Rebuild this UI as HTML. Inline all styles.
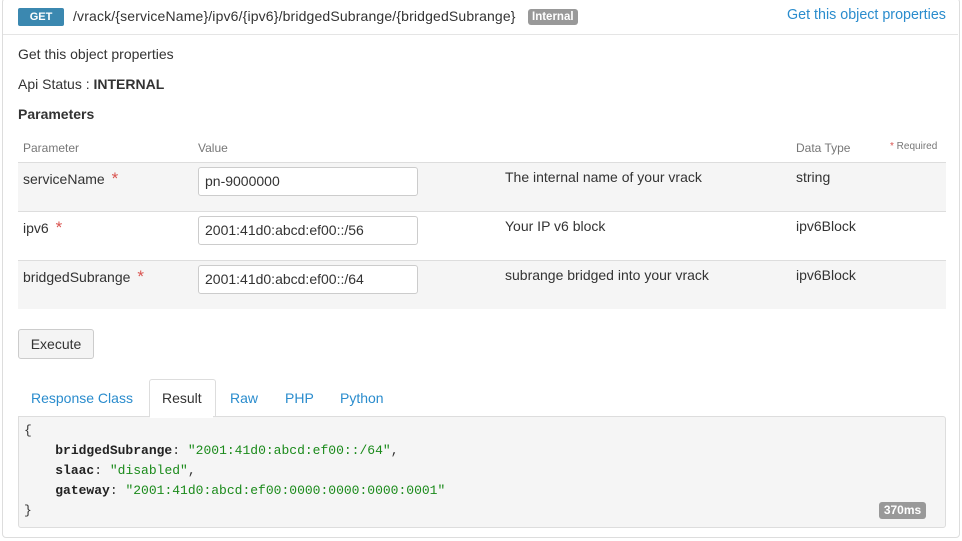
<!DOCTYPE html><html><head><style>
body{margin:0;width:962px;height:541px;background:#fff;font-family:"Liberation Sans",sans-serif;font-size:14px;color:#333;position:relative;overflow:hidden}
.a{position:absolute}
.panel{left:2px;top:-2px;width:956px;height:538px;border:1px solid #ddd;border-radius:4px}
.hdr{left:3px;top:34px;width:955px;border-top:1px solid #e5e5e5}
.get{left:18px;top:8px;width:46px;height:18px;background:#3b88b0;color:#fff;font-size:11px;font-weight:bold;text-align:center;line-height:18px;border-radius:2px}
.int{left:528px;top:9px;padding:0 4px;height:16px;background:#999;color:#fff;font-size:11.5px;font-weight:bold;line-height:16px;border-radius:3px}
.lnk{color:#2a8ccd}
.row{left:18px;width:928px;border-top:1px solid #ddd}
.inp{left:198px;width:212px;height:27px;border:1px solid #ccc;border-radius:3px;padding-left:6px;line-height:27px;background:#fff}
.star{color:#d9534f;font-size:17px;margin-left:3px}
.th{font-size:12px;color:#777}
pre{margin:0;font-family:"Liberation Mono",monospace;font-size:13px;line-height:20px;color:#333}
.k{color:#222;font-weight:bold}.s{color:#1a8a1a}
</style></head><body>
<div class="a panel"></div>
<div class="a hdr"></div>
<div class="a get">GET</div>
<div class="a" style="left:73px;top:8px;letter-spacing:0.15px">/vrack/{serviceName}/ipv6/{ipv6}/bridgedSubrange/{bridgedSubrange}</div>
<div class="a int">Internal</div>
<div class="a lnk" style="left:787px;top:7px;font-size:14.3px">Get this object properties</div>
<div class="a" style="left:18px;top:46px">Get this object properties</div>
<div class="a" style="left:18px;top:76px">Api Status : <b>INTERNAL</b></div>
<div class="a" style="left:18px;top:106px;font-weight:bold">Parameters</div>
<div class="a th" style="left:23px;top:141px">Parameter</div>
<div class="a th" style="left:198px;top:141px">Value</div>
<div class="a th" style="left:796px;top:141px">Data Type</div>
<div class="a" style="left:890px;top:141px;font-size:10px;color:#777"><span style="color:#d9534f">*</span> Required</div>
<div class="a row" style="top:162px;height:48px;background:#f5f5f5"></div>
<div class="a row" style="top:211px;height:48px"></div>
<div class="a row" style="top:260px;height:48px;background:#f5f5f5"></div>
<div class="a" style="left:23px;top:169px">serviceName <span class="star">*</span></div>
<div class="a inp" style="top:167px">pn-9000000</div>
<div class="a" style="left:505px;top:169px">The internal name of your vrack</div>
<div class="a" style="left:796px;top:169px">string</div>
<div class="a" style="left:23px;top:218px">ipv6 <span class="star">*</span></div>
<div class="a inp" style="top:216px">2001:41d0:abcd:ef00::/56</div>
<div class="a" style="left:505px;top:218px">Your IP v6 block</div>
<div class="a" style="left:796px;top:218px">ipv6Block</div>
<div class="a" style="left:23px;top:267px">bridgedSubrange <span class="star">*</span></div>
<div class="a inp" style="top:265px">2001:41d0:abcd:ef00::/64</div>
<div class="a" style="left:505px;top:267px">subrange bridged into your vrack</div>
<div class="a" style="left:796px;top:267px">ipv6Block</div>
<div class="a" style="left:18px;top:329px;width:74px;height:28px;border:1px solid #ccc;border-radius:3px;background:#f4f4f4;text-align:center;line-height:28px">Execute</div>
<div class="a" style="left:149px;top:379px;width:65px;height:38px;border:1px solid #ddd;border-bottom:none;border-radius:3px 3px 0 0;background:#fff"></div>
<div class="a lnk" style="left:31px;top:390px">Response Class</div>
<div class="a" style="left:162px;top:390px">Result</div>
<div class="a lnk" style="left:230px;top:390px">Raw</div>
<div class="a lnk" style="left:285px;top:390px">PHP</div>
<div class="a lnk" style="left:340px;top:390px">Python</div>
<div class="a" style="left:18px;top:416px;width:926px;height:110px;background:#f5f5f5;border:1px solid #ddd;border-radius:0 3px 3px 3px"></div>
<div class="a" style="left:150px;top:416px;width:63px;height:2px;background:#fff"></div>
<pre class="a" style="left:24px;top:421px">{
    <span class="k">bridgedSubrange</span>: <span class="s">"2001:41d0:abcd:ef00::/64"</span>,
    <span class="k">slaac</span>: <span class="s">"disabled"</span>,
    <span class="k">gateway</span>: <span class="s">"2001:41d0:abcd:ef00:0000:0000:0000:0001"</span>
}</pre>
<div class="a" style="left:879px;top:502px;width:47px;height:17px;background:#999;color:#fff;font-size:12px;font-weight:bold;text-align:center;line-height:17px;border-radius:3px">370ms</div>
</body></html>
